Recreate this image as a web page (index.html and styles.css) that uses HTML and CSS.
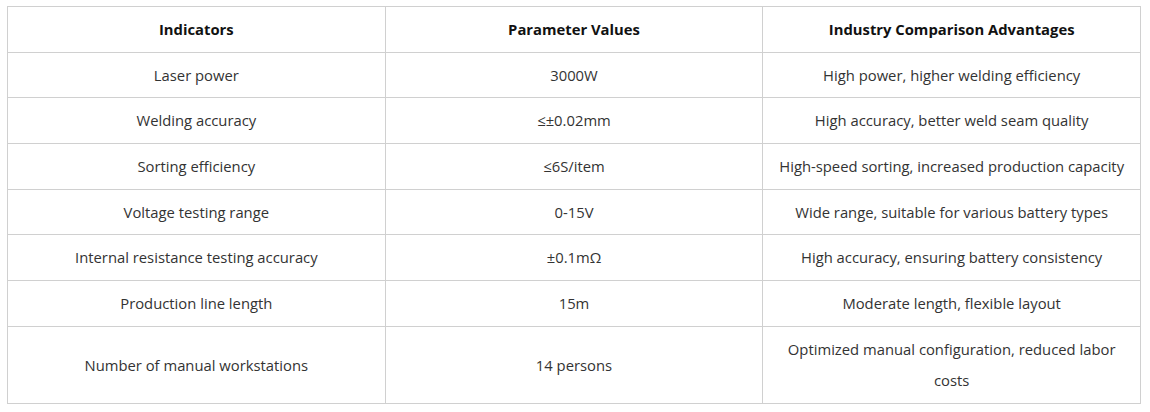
FILE: index.html
```html
<!DOCTYPE html>
<html lang="en">
<head>
<meta charset="utf-8">
<title>Specifications</title>
<link rel="stylesheet" href="styles.css">
</head>
<body>
<div class="page">
<table class="spec">
<thead>
<tr><th>Indicators</th><th>Parameter Values</th><th>Industry Comparison Advantages</th></tr>
</thead>
<tbody>
<tr><td>Laser power</td><td>3000W</td><td>High power, higher welding efficiency</td></tr>
<tr><td>Welding accuracy</td><td>≤±0.02mm</td><td>High accuracy, better weld seam quality</td></tr>
<tr><td>Sorting efficiency</td><td>≤6S/item</td><td>High-speed sorting, increased production capacity</td></tr>
<tr><td>Voltage testing range</td><td>0-15V</td><td>Wide range, suitable for various battery types</td></tr>
<tr><td>Internal resistance testing accuracy</td><td>±0.1mΩ</td><td>High accuracy, ensuring battery consistency</td></tr>
<tr><td>Production line length</td><td>15m</td><td>Moderate length, flexible layout</td></tr>
<tr><td>Number of manual workstations</td><td>14 persons</td><td>Optimized manual configuration, reduced labor costs</td></tr>
</tbody>
</table>
</div>
</body>
</html>
```
FILE: styles.css
```css
html, body {
  margin: 0;
  padding: 0;
  background: #ffffff;
}
.page {
  padding: 6px 0 0 7px;
}
.spec {
  width: 1134px;
  border-collapse: collapse;
  table-layout: fixed;
  font-family: "Open Sans", "Noto Sans", sans-serif;
  font-size: 14.8px;
  color: #333333;
}
.spec th,
.spec td {
  border: 1px solid #d0d0d0;
  text-align: center;
  vertical-align: middle;
  line-height: 31.67px;
  padding: 7px 8px 6px;
}
.spec th {
  font-weight: 700;
  color: #111111;
}
```
